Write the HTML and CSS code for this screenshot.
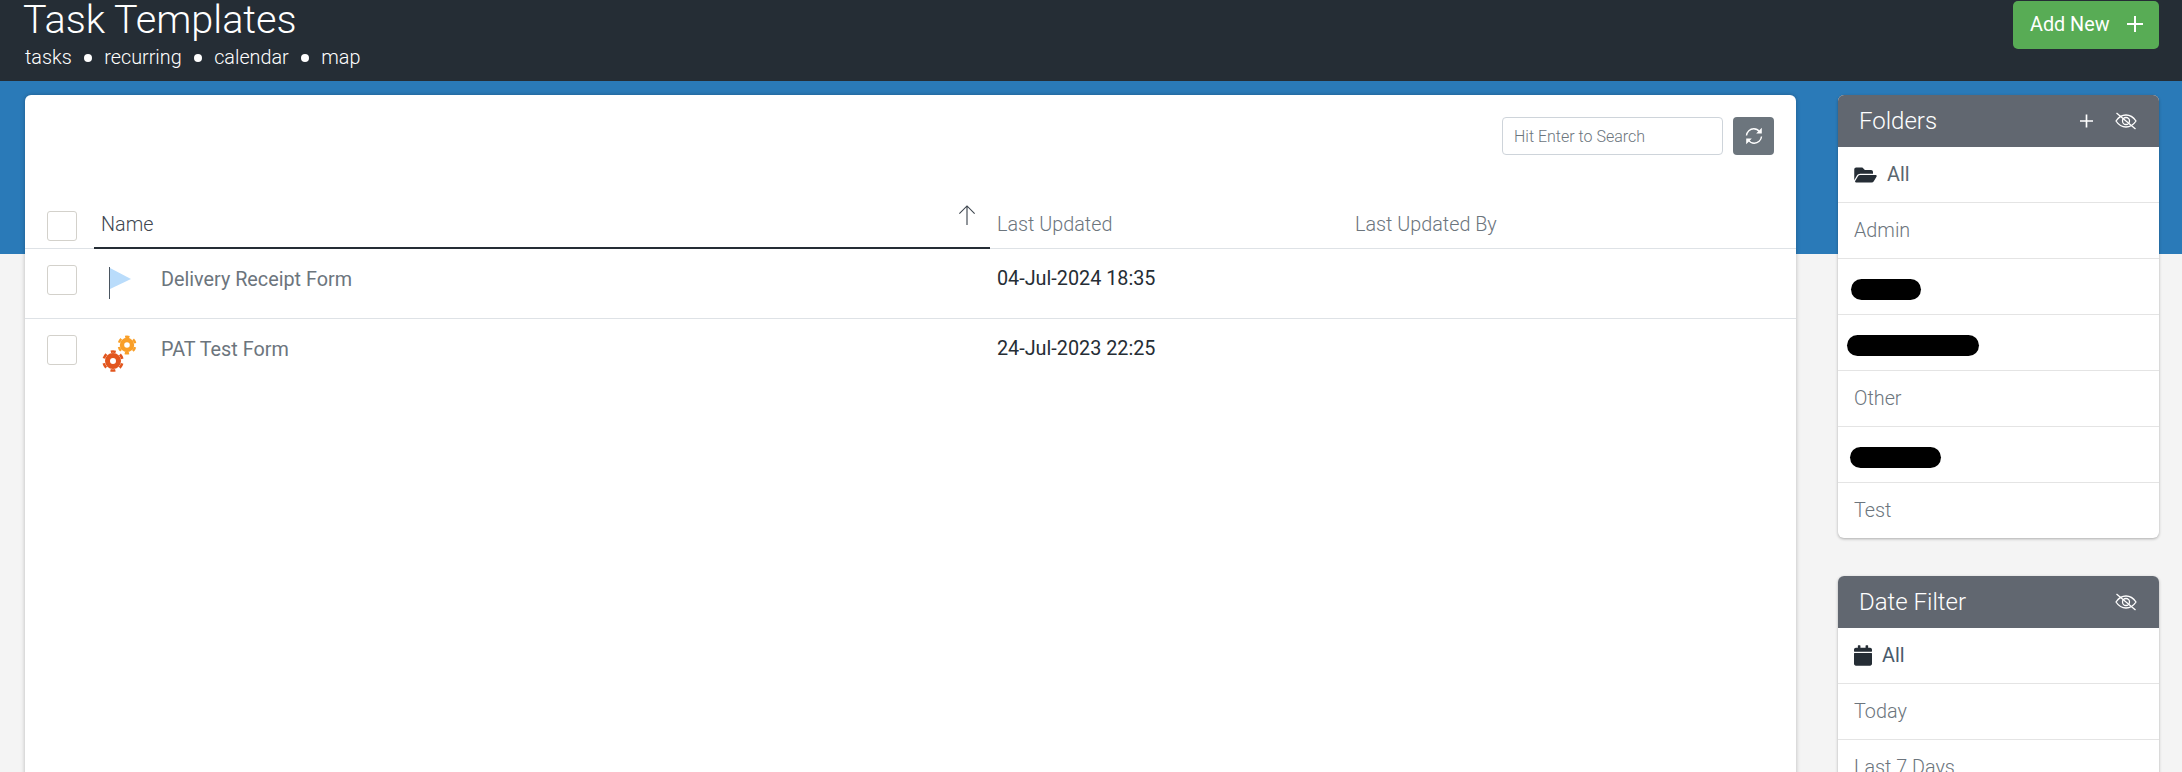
FILE: index.html
```html
<!DOCTYPE html>
<html lang="en">
<head>
<meta charset="utf-8">
<title>Task Templates</title>
<link rel="stylesheet" href="styles.css">
</head>
<body>
<header class="topbar">
  <div class="heading">
    <h1 class="title">Task Templates</h1>
    <nav class="subnav">
      <a>tasks</a><i class="dot"></i><a>recurring</a><i class="dot"></i><a>calendar</a><i class="dot"></i><a>map</a>
    </nav>
  </div>
  <button class="add-btn">Add New
    <svg class="plus-lg" viewBox="0 0 16 16"><path d="M8 0v16M0 8h16"/></svg>
  </button>
</header>
<div class="page">
  <main class="card">
    <div class="toolbar">
      <input class="search" type="text" placeholder="Hit Enter to Search">
      <button class="refresh" aria-label="Refresh">
        <svg viewBox="0 0 20 20" class="refresh-icon">
          <path d="M2.500 9.500C2.800 5.500 6 2.800 9.800 2.800c2.400 0 4.300 1 5.600 2.800"/>
          <path d="M17.500 10.500c-.3 4-3.500 6.700-7.300 6.700-2.400 0-4.300-1-5.600-2.800"/>
          <path class="solid" d="M17.800 1.800v5.600h-5.600zM2.200 18.200v-5.600h5.600z"/>
        </svg>
      </button>
    </div>
    <div class="row head">
      <div class="cell check"><span class="box"></span></div>
      <div class="cell name sorted">Name
        <svg class="arrow" viewBox="0 0 20 22"><path d="M10 21V1M2 9l8-8 8 8"/></svg>
      </div>
      <div class="cell">Last Updated</div>
      <div class="cell">Last Updated By</div>
    </div>
    <div class="row">
      <div class="cell check"><span class="box"></span></div>
      <div class="cell name">
        <svg class="item-icon" viewBox="0 0 46 46">
          <path class="flag" d="M10 8l21 11-21 10z"/>
          <rect class="pole" x="9" y="7" width="1" height="32"/>
        </svg>
        <span>Delivery Receipt Form</span>
      </div>
      <div class="cell date">04-Jul-2024 18:35</div>
      <div class="cell"></div>
    </div>
    <div class="row last">
      <div class="cell check"><span class="box"></span></div>
      <div class="cell name">
        <svg class="item-icon" viewBox="0 0 46 46">
          <g class="gear small">
            <circle class="ring" cx="27" cy="15" r="5"/>
            <circle class="teeth" cx="27" cy="15" r="8.300"/>
          </g>
          <g class="gear big">
            <circle class="ring" cx="13" cy="31" r="5.500"/>
            <circle class="teeth" cx="13" cy="31" r="9.500"/>
          </g>
        </svg>
        <span>PAT Test Form</span>
      </div>
      <div class="cell date">24-Jul-2023 22:25</div>
      <div class="cell"></div>
    </div>
  </main>
  <aside class="sidebar">
    <section class="panel">
      <div class="panel-head">
        <h2>Folders</h2>
        <svg class="plus-sm" viewBox="0 0 14 14"><path d="M7 0v14M0 7h14"/></svg>
        <svg class="eye" viewBox="0 0 22 18">
          <path d="M1 9c3-4.500 6.200-6 10-6s7 1.500 10 6c-3 4.500-6.200 6-10 6S4 13.500 1 9z"/>
          <circle cx="11" cy="9" r="3.500"/>
          <path d="M1.500 1l19 16"/>
        </svg>
      </div>
      <ul class="list">
        <li class="active folder-all">
          <svg class="folder-icon" viewBox="0 0 576 512"><path d="M572.694 292.093L500.27 416.248A63.997 63.997 0 0 1 444.989 448H45.025c-18.523 0-30.064-20.093-20.731-36.093l72.424-124.155A64 64 0 0 1 152 256h399.964c18.523 0 30.064 20.093 20.73 36.093zM152 224h328v-48c0-26.51-21.49-48-48-48H272l-64-64H48C21.49 64 0 85.49 0 112v278.046l69.077-118.418C86.214 242.25 117.989 224 152 224z"/></svg>
          All
        </li>
        <li>Admin</li>
        <li><span class="redact r1"></span></li>
        <li><span class="redact r2"></span></li>
        <li>Other</li>
        <li><span class="redact r3"></span></li>
        <li>Test</li>
      </ul>
    </section>
    <section class="panel">
      <div class="panel-head">
        <h2>Date Filter</h2>
        <svg class="eye" viewBox="0 0 22 18">
          <path d="M1 9c3-4.500 6.200-6 10-6s7 1.500 10 6c-3 4.500-6.200 6-10 6S4 13.500 1 9z"/>
          <circle cx="11" cy="9" r="3.500"/>
          <path d="M1.500 1l19 16"/>
        </svg>
      </div>
      <ul class="list">
        <li class="active date-all">
          <svg class="cal-icon" viewBox="0 0 448 512"><path d="M12 192h424c6.600 0 12 5.400 12 12v260c0 26.500-21.500 48-48 48H48c-26.500 0-48-21.500-48-48V204c0-6.600 5.400-12 12-12zm436-44v-36c0-26.500-21.500-48-48-48h-48V12c0-6.600-5.400-12-12-12h-40c-6.600 0-12 5.400-12 12v52H160V12c0-6.600-5.400-12-12-12h-40c-6.600 0-12 5.400-12 12v52H48C21.500 64 0 85.500 0 112v36c0 6.600 5.400 12 12 12h424c6.600 0 12-5.400 12-12z"/></svg>
          All
        </li>
        <li>Today</li>
        <li>Last 7 Days</li>
      </ul>
    </section>
  </aside>
</div>
</body>
</html>
```

FILE: styles.css
```css
* { box-sizing: border-box; }
html, body { height: 100%; }
body {
  margin: 0;
  height: 772px;
  overflow: hidden;
  font-family: Roboto, "Liberation Sans", sans-serif;
  font-weight: 300;
  font-size: 18px;
  color: #252d35;
  background: #f4f4f4;
}

/* top bar */
.topbar {
  height: 81px;
  background: #252d35;
  color: #fff;
  display: flex;
  justify-content: space-between;
  align-items: flex-start;
  padding: 0 23px;
}
.title { margin: 0; font-size: 39.6px; font-weight: 300; line-height: 40px; }
.subnav {
  display: flex;
  align-items: center;
  gap: 12.25px;
  margin: 6px 0 0 2px;
  font-size: 19.8px;
  line-height: 24px;
}
.dot { width: 8px; height: 8px; border-radius: 50%; background: #fff; }
.add-btn {
  margin-top: 1px;
  width: 146px;
  height: 48px;
  border: 0;
  border-radius: 5px;
  background: #58ac55;
  color: #fff;
  font: 400 19.8px Roboto, sans-serif;
  display: flex;
  align-items: center;
  gap: 17px;
  padding: 0 0 2px 17px;
}
.plus-lg { width: 16px; height: 16px; fill: none; stroke: #fff; stroke-width: 2; }

/* page */
.page {
  display: flex;
  align-items: flex-start;
  gap: 42px;
  padding: 14px 23px 0 25px;
  height: 691px;
  background: linear-gradient(#2a7ab8 0, #2a7ab8 173px, #f4f4f4 173px);
}
.card {
  width: 1771px;
  height: 700px;
  background: #fff;
  border-radius: 6px 6px 0 0;
  box-shadow: 0 0 4px rgba(0, 0, 0, .25);
}
.toolbar {
  display: flex;
  justify-content: flex-end;
  gap: 10px;
  height: 105px;
  padding: 22px 22px 0 0;
}
.search {
  width: 221px;
  height: 38px;
  padding: 0 11px;
  border: 1px solid #ced4da;
  border-radius: 4px;
  font: 300 16px Roboto, sans-serif;
}
.search::placeholder { color: #6c757d; opacity: 1; }
.refresh {
  width: 41px;
  height: 38px;
  padding: 0;
  border: 0;
  border-radius: 4px;
  background: #6c757d;
  display: flex;
  align-items: center;
  justify-content: center;
}
.refresh-icon { width: 20px; height: 20px; fill: none; stroke: #fff; stroke-width: 1.4; }
.refresh-icon .solid { fill: #fff; stroke: none; }

/* table */
.row {
  display: grid;
  grid-template-columns: 69px 896px 358px 1fr;
  height: 70px;
  border-bottom: 1px solid #dee2e6;
  font-size: 19.8px;
}
.row.last { border-bottom: 0; }
.cell {
  padding: 18px 0 0 7px;
  line-height: 24px;
  color: #6c757d;
  min-width: 0;
}
.row.head { height: 49px; border-bottom: 0; }
.row.head .cell {
  padding-top: 13px;
  border-bottom: 1px solid #dee2e6;
}
.row.head .cell.name { color: #3f4750; position: relative; padding-top: 13px; }
.row.head .cell.sorted { border-bottom: 2px solid #252d35; }
.cell.check { padding: 16px 0 0 22px; }
.row.head .cell.check { padding: 11px 0 0 22px; }
.box {
  display: block;
  width: 30px;
  height: 30px;
  border: 1px solid #d3d1cb;
  border-radius: 3px;
  background: #fff;
}
.cell.name { display: flex; align-items: flex-start; font-weight: 400; padding-top: 19px; }
.row.head .cell.name { font-weight: 300; }
.item-icon { width: 46px; height: 46px; margin: -8px 15px 0 -1px; flex: none; }
.flag { fill: #b9dcfb; }
.pole { fill: #4a5560; }
.gear circle { fill: none; }
.small .ring { stroke: #f99f28; stroke-width: 4.4; }
.small .teeth { stroke: #f99f28; stroke-width: 2.4; stroke-dasharray: 4.35 4.35; stroke-dashoffset: -2.17; }
.big .ring { stroke: #e2561e; stroke-width: 5; }
.big .teeth { stroke: #e2561e; stroke-width: 2.6; stroke-dasharray: 4.97 4.97; stroke-dashoffset: -2.49; }
.date { color: #252d35; font-weight: 400; }
.arrow {
  position: absolute;
  right: 13px;
  top: 5px;
  width: 20px;
  height: 21px;
  fill: none;
  stroke: #3f4750;
  stroke-width: 1.2;
}

/* sidebar */
.sidebar { width: 321px; display: flex; flex-direction: column; gap: 38px; }
.panel {
  background: #fff;
  border-radius: 6px;
  box-shadow: 0 1px 3px rgba(0, 0, 0, .3);
}
.panel-head {
  display: flex;
  align-items: center;
  height: 52px;
  padding: 0 22px 0 21px;
  background: #616770;
  border-radius: 6px 6px 0 0;
  color: #fff;
}
.panel-head h2 { margin: 0 auto 0 0; font-size: 24px; font-weight: 300; }
.plus-sm { width: 13px; height: 14px; margin-right: 22px; fill: none; stroke: #fff; stroke-width: 1.8; }
.eye { width: 22px; height: 18px; fill: none; stroke: #fff; stroke-width: 1.3; }
.list { margin: 0; padding: 0; list-style: none; font-size: 19.8px; }
.list li {
  height: 56px;
  padding: 0 16px;
  display: flex;
  align-items: center;
  border-bottom: 1px solid #e4e4e4;
  color: #6c757d;
}
.list li:last-child { height: 55px; border-bottom: 0; }
.active.folder-all { color: #5b6670; font-weight: 400; gap: 10px; }
.active.date-all { color: #495a6b; font-weight: 400; gap: 10px; }
.folder-icon { width: 23px; height: 20px; fill: #252d35; }
.cal-icon { width: 18px; height: 21px; fill: #252d35; }
.redact { display: block; height: 21px; border-radius: 11px; background: #000; margin-top: 5px; }
.r1 { width: 70px; margin-left: -3px; }
.r2 { width: 132px; margin-left: -7px; }
.r3 { width: 91px; margin-left: -4px; }
```
